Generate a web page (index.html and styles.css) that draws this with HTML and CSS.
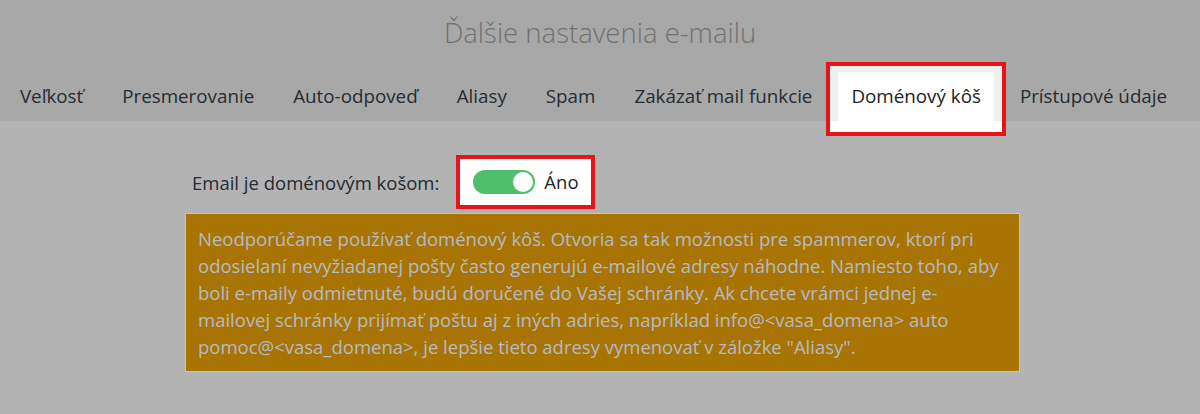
FILE: index.html
```html
<!DOCTYPE html>
<html lang="sk">
<head>
  <meta charset="UTF-8">
  <meta name="viewport" content="width=device-width, initial-scale=1.0">
  <title>Ďalšie nastavenia e-mailu</title>
  <link rel="stylesheet" href="styles.css">
</head>
<body>
  <header class="settings-header">
    <h1>Ďalšie nastavenia e-mailu</h1>
    <ul class="tabs">
      <li><a href="#">Veľkosť</a></li>
      <li><a href="#">Presmerovanie</a></li>
      <li><a href="#">Auto-odpoveď</a></li>
      <li><a href="#">Aliasy</a></li>
      <li><a href="#">Spam</a></li>
      <li><a href="#">Zakázať mail funkcie</a></li>
      <li class="spot spot-tab"><a href="#" class="active">Doménový kôš</a></li>
      <li><a href="#">Prístupové údaje</a></li>
    </ul>
  </header>
  <main class="content">
    <div class="field-row">
      <span class="field-label">Email je doménovým košom:</span>
      <div class="spot spot-toggle">
        <span class="switch"><span class="knob"></span></span>
        <span class="switch-text">Áno</span>
      </div>
    </div>
    <div class="warning">
      Neodporúčame používať doménový kôš. Otvoria sa tak možnosti pre spammerov, ktorí pri
      odosielaní nevyžiadanej pošty často generujú e-mailové adresy náhodne. Namiesto toho, aby
      boli e-maily odmietnuté, budú doručené do Vašej schránky. Ak chcete vrámci jednej e-mailovej
      schránky prijímať poštu aj z iných adries, napríklad info@&lt;vasa_domena&gt; auto
      pomoc@&lt;vasa_domena&gt;, je lepšie tieto adresy vymenovať v záložke "Aliasy".
    </div>
  </main>
</body>
</html>
```

FILE: styles.css
```css
body {
  margin: 0;
  background-color: #b3b3b3;
  font-family: 'Open Sans', 'DejaVu Sans', sans-serif;
  height: 414px;
  overflow: hidden;
}

.settings-header {
  background-color: #a8a8a8;
  padding-top: 14px;
  text-align: center;
}

.settings-header h1 {
  margin: 0;
  font-size: 27.5px;
  font-weight: 300;
  line-height: 38px;
  color: #717171;
}

.tabs {
  list-style: none;
  margin: 20px 0 0;
  padding: 0 13px 0 0;
  display: flex;
  justify-content: center;
  align-items: flex-end;
  gap: 13px;
}

.tabs a {
  display: block;
  padding: 12px 13px;
  font-size: 18.8px;
  line-height: 25px;
  color: #272b33;
  text-decoration: none;
}

.tabs a.active {
  background-color: #fff;
  border-radius: 2px 2px 0 0;
  color: #222;
}

/* highlighted spots are shown without the dim layer */
.spot {
  border: 4px solid #e8141a;
  position: relative;
  z-index: 1;
}

.spot-tab {
  padding: 6px 8px 11px;
  margin: -10px -12px -15px;
  background: linear-gradient(to bottom, #efefef calc(100% - 11px), #fff 0);
}

.content {
  margin-left: 185px;
  width: 835px;
  padding-top: 34px;
}

.field-row {
  display: flex;
  align-items: center;
  padding-left: 7px;
}

.field-label {
  font-size: 18.5px;
  color: #262a33;
  margin-right: 17px;
}

.spot-toggle {
  display: flex;
  align-items: center;
  background-color: #fff;
  padding: 11px 12px 11px 13px;
}

.switch {
  width: 62px;
  height: 24px;
  border-radius: 12px;
  background-color: #50bf6d;
  display: flex;
  align-items: center;
  justify-content: flex-end;
  padding-right: 2px;
  box-sizing: border-box;
}

.knob {
  width: 20px;
  height: 20px;
  border-radius: 50%;
  background-color: #fff;
}

.switch-text {
  font-size: 18.5px;
  line-height: 24px;
  color: #222;
  margin-left: 9px;
}

.warning {
  margin-top: 4px;
  background-color: #a87505;
  border: 1px solid #c2c3cb;
  padding: 11px 12px;
  font-size: 18.5px;
  line-height: 27px;
  color: #b6bac6;
}
```
